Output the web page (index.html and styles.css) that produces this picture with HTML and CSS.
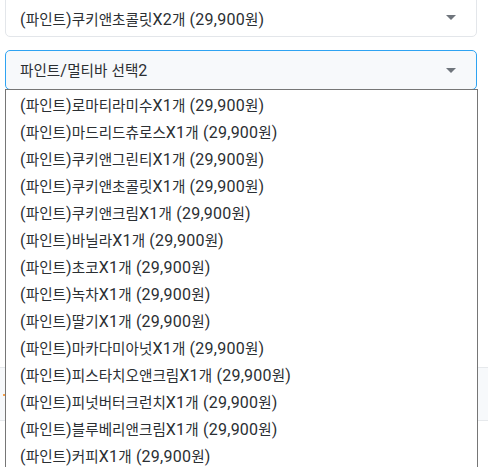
FILE: index.html
```html
<!DOCTYPE html>
<html lang="ko">
<head>
<meta charset="utf-8">
<link rel="stylesheet" href="styles.css">
</head>
<body>
<div class="page">
  <div class="select select-done">
    <span class="select-text">(<span class="ko">파인트</span>)<span class="ko">쿠키앤초콜릿</span>X2<span class="ko">개</span> (29,900<span class="ko">원</span>)</span>
    <span class="caret"></span>
  </div>
  <div class="select-wrap">
    <div class="select select-open">
      <span class="select-text"><span class="ko">파인트</span>/<span class="ko">멀티바 선택</span>2</span>
      <span class="caret"></span>
    </div>
    <ul class="options">
      <li>(<span class="ko">파인트</span>)<span class="ko">로마티라미수</span>X1<span class="ko">개</span> (29,900<span class="ko">원</span>)</li>
      <li>(<span class="ko">파인트</span>)<span class="ko">마드리드츄로스</span>X1<span class="ko">개</span> (29,900<span class="ko">원</span>)</li>
      <li>(<span class="ko">파인트</span>)<span class="ko">쿠키앤그린티</span>X1<span class="ko">개</span> (29,900<span class="ko">원</span>)</li>
      <li>(<span class="ko">파인트</span>)<span class="ko">쿠키앤초콜릿</span>X1<span class="ko">개</span> (29,900<span class="ko">원</span>)</li>
      <li>(<span class="ko">파인트</span>)<span class="ko">쿠키앤크림</span>X1<span class="ko">개</span> (29,900<span class="ko">원</span>)</li>
      <li>(<span class="ko">파인트</span>)<span class="ko">바닐라</span>X1<span class="ko">개</span> (29,900<span class="ko">원</span>)</li>
      <li>(<span class="ko">파인트</span>)<span class="ko">초코</span>X1<span class="ko">개</span> (29,900<span class="ko">원</span>)</li>
      <li>(<span class="ko">파인트</span>)<span class="ko">녹차</span>X1<span class="ko">개</span> (29,900<span class="ko">원</span>)</li>
      <li>(<span class="ko">파인트</span>)<span class="ko">딸기</span>X1<span class="ko">개</span> (29,900<span class="ko">원</span>)</li>
      <li>(<span class="ko">파인트</span>)<span class="ko">마카다미아넛</span>X1<span class="ko">개</span> (29,900<span class="ko">원</span>)</li>
      <li>(<span class="ko">파인트</span>)<span class="ko">피스타치오앤크림</span>X1<span class="ko">개</span> (29,900<span class="ko">원</span>)</li>
      <li>(<span class="ko">파인트</span>)<span class="ko">피넛버터크런치</span>X1<span class="ko">개</span> (29,900<span class="ko">원</span>)</li>
      <li>(<span class="ko">파인트</span>)<span class="ko">블루베리앤크림</span>X1<span class="ko">개</span> (29,900<span class="ko">원</span>)</li>
      <li>(<span class="ko">파인트</span>)<span class="ko">커피</span>X1<span class="ko">개</span> (29,900<span class="ko">원</span>)</li>
    </ul>
  </div>
  <div class="behind">
    <div class="behind-row"><span class="dot"></span></div>
    <div class="behind-cells">
      <div class="cell cell-a"></div>
      <div class="cell cell-b"></div>
      <div class="cell cell-c"></div>
    </div>
  </div>
</div>
</body>
</html>
```

FILE: styles.css
```css
* { box-sizing: border-box; }
html, body {
  margin: 0;
  padding: 0;
  background: #ffffff;
  overflow: hidden;
}
body {
  font-family: Roboto, "Noto Sans CJK KR", sans-serif;
  color: #2b2f33;
}
.ko {
  font-family: "Noto Sans CJK KR", sans-serif;
  font-size: 14.6px;
  letter-spacing: 0;
}
.page {
  position: relative;
  width: 488px;
  height: 473px;
}
.select {
  display: flex;
  align-items: center;
  justify-content: space-between;
  margin-left: 5px;
  width: 472px;
  border-radius: 5px;
  padding: 0 20px 0 14px;
  font-size: 16px;
}
.select-done {
  margin-top: -6px;
  height: 43px;
  border: 1px solid #e3e6ea;
  background: #ffffff;
}
.select-done .select-text { padding-top: 8px; }
.select-done .caret { margin-top: 4px; }
.select-wrap {
  position: relative;
  margin-top: 13px;
}
.select-open {
  height: 40px;
  border: 1px solid #2ea3f2;
  background: #f7f9fb;
}
.select-text {
  line-height: 20px;
  padding-top: 1px;
  white-space: nowrap;
  letter-spacing: 0.25px;
}
.caret {
  width: 0;
  height: 0;
  border-left: 5px solid transparent;
  border-right: 5px solid transparent;
  border-top: 5px solid #6f757c;
}
.options {
  position: absolute;
  z-index: 2;
  top: 39px;
  left: 5px;
  width: 473px;
  margin: 0;
  padding: 0;
  list-style: none;
  background: #ffffff;
  border: 1px solid #767676;
}
.options li {
  height: 27px;
  line-height: 27px;
  padding-left: 14px;
  padding-top: 1px;
  font-size: 16px;
  letter-spacing: 0.25px;
  white-space: nowrap;
}
.behind {
  padding-top: 277px;
}
.behind-row {
  position: relative;
  height: 54px;
  background: #f7f9fb;
  border-top: 1px solid #e6e9ec;
  border-bottom: 1px solid #e6e9ec;
}
.dot {
  position: absolute;
  left: 3px;
  top: 26px;
  width: 2px;
  height: 2px;
  background: #f5a04a;
}
.behind-cells {
  display: flex;
  height: 60px;
}
.cell { height: 100%; }
.cell-a { width: 118px; border-right: 1px solid #e6e9ec; }
.cell-b { width: 282px; border-right: 1px solid #e6e9ec; }
.cell-c { flex: 1; }
```
